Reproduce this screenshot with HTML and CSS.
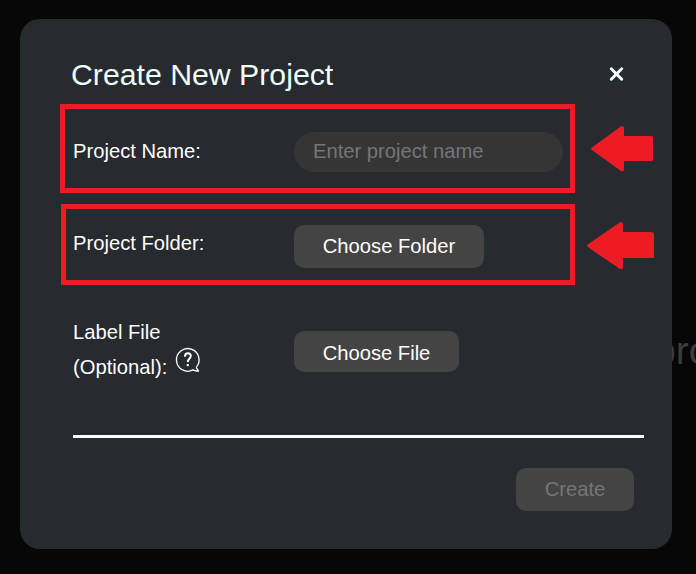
FILE: index.html
```html
<!DOCTYPE html>
<html lang="en">
<head>
<meta charset="utf-8">
<title>Create New Project</title>
<link rel="stylesheet" href="styles.css">
</head>
<body>
<div class="backdrop-text">pro</div>
<main class="modal">
  <header class="modal-header">
    <h1>Create New Project</h1>
    <button class="close" aria-label="Close"><svg width="16" height="16" viewBox="0 0 16 16"><path d="M2.3 2.8 12.7 13.2M12.7 2.8 2.3 13.2"/></svg></button>
  </header>
  <section class="row row-name">
    <label for="name">Project Name:</label>
    <input id="name" type="text" placeholder="Enter project name">
    <svg class="arrow arrow-name" width="64" height="46" viewBox="0 0 64 46"><path d="M0 22.2 L30 .3 Q32 -.2 33 1.5 V10 H60.5 Q62 10 62 11.5 V33.5 Q62 35 60.5 35 H33 V44 Q32 46 30 45 L.5 23.8Z"/></svg>
  </section>
  <section class="row row-folder">
    <label>Project Folder:</label>
    <button class="btn">Choose Folder</button>
    <svg class="arrow arrow-folder" width="68" height="48" viewBox="0 0 68 48"><path d="M0 23 L33 .3 Q35 -.2 36 1.5 V10 H64 Q67 10 67 13 V36 H36 V46 Q35 48 33 47 L.5 24.8Z"/></svg>
  </section>
  <section class="row row-label">
    <label>Label File<br>(Optional): <svg class="help" width="26" height="26" viewBox="0 0 26 26"><path class="bubble" d="M21.2 20.4A11.3 11.3 0 1 0 18 22.9Q20.4 24.4 23.6 24.1Q22.2 22.2 21.2 20.4"/><path class="mark" d="M9.9 9.7C10 7.4 11.1 6.2 12.8 6.2C14.6 6.2 15.8 7.3 15.8 9C15.8 11.4 12.8 11.7 12.8 15"/><circle cx="12.8" cy="18" r="1.2"/></svg></label>
    <button class="btn btn-file">Choose File</button>
  </section>
  <hr>
  <footer><button class="btn btn-create" disabled>Create</button></footer>
</main>
</body>
</html>
```
FILE: styles.css
```css
* { box-sizing: border-box; }
body {
  margin: 0;
  height: 574px;
  padding: 19px 24px 0 20px;
  overflow: hidden;
  background: #070707;
  font: 20.2px/35px "Liberation Sans", Arial, sans-serif;
  color: #fff;
}
.backdrop-text {
  position: absolute;
  left: 654px;
  top: 329px;
  font-size: 39px;
  line-height: 44px;
  color: #3c3c3c;
}
.modal {
  position: relative;
  height: 530px;
  border-radius: 20px;
  background: #272a2f;
}
.modal-header {
  display: flex;
  justify-content: space-between;
  height: 85px;
  padding: 38px 47px 0 51px;
}
h1 {
  margin: 0;
  font-size: 30.25px;
  font-weight: 400;
  line-height: 35px;
  color: #f0ffff;
}
button, input { font: inherit; border: 0; }
.close {
  width: 16px;
  height: 16px;
  margin-top: 9px;
  padding: 0;
  background: none;
}
.close svg { display: block; }
.close path { fill: none; stroke: #f0ffff; stroke-width: 3; stroke-linecap: round; }
.row {
  position: relative;
  display: grid;
  grid-template-columns: 221px auto;
  justify-content: start;
  align-items: start;
}
.row-name {
  width: 515px;
  height: 89px;
  margin-left: 40px;
  padding: 23px 0 0 8px;
  border: 5px solid #ed1c24;
}
.row-name label { margin-top: 2px; }
input {
  width: 269px;
  height: 40px;
  padding: 0 19px 2px;
  border-radius: 20px;
  background: #353535;
  color: #fff;
}
input::placeholder { color: #757575; opacity: 1; }
.row-folder {
  width: 514px;
  height: 81px;
  margin: 11px 0 0 41px;
  padding: 16px 0 0 7px;
  border: 5px solid #ed1c24;
}
.row-folder label { margin-top: 1px; }
.row-label { height: 70px; margin: 30px 0 0 53px; }
.btn {
  width: 190px;
  height: 43px;
  padding: 0;
  line-height: 43px;
  text-align: center;
  border-radius: 10px;
  background: #444;
  color: #fff;
}
.btn-file { width: 165px; height: 41px; margin-top: 16px; padding-top: 1px; }
.help { margin: -10px 0 0 2.5px; vertical-align: 1px; overflow: visible; }
.help path { fill: none; stroke: #fff; stroke-width: 1.3; stroke-linejoin: round; }
.help .mark { stroke-width: 1.9; }
.help circle { fill: #fff; }
hr {
  height: 3px;
  margin: 50px 28px 0 53px;
  border: 0;
  background: #fff;
}
footer {
  display: flex;
  justify-content: flex-end;
  padding: 30px 38px 0 0;
}
.btn-create { width: 118px; color: #757575; }
.arrow { position: absolute; fill: #ed1c24; overflow: visible; }
.arrow-name { left: 526px; top: 17px; }
.arrow-folder { left: 521px; top: 13px; }
```
